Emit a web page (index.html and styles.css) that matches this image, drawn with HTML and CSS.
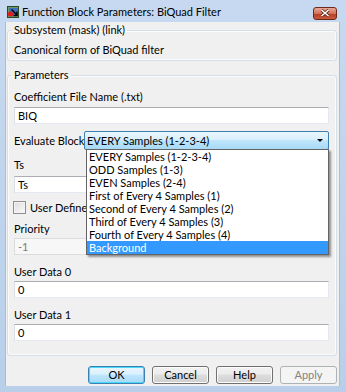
FILE: index.html
```html
<!DOCTYPE html>
<html lang="en">
<head>
    <meta charset="UTF-8">
    <title>Function Block Parameters: BiQuad Filter</title>
    <link rel="stylesheet" href="styles.css">
</head>
<body>
<div class="window">
    <div class="titlebar">
        <svg class="app-icon" width="12" height="12" viewBox="0 0 12 12">
            <rect x="0.5" y="0.5" width="11" height="11" fill="#6f9a6a" stroke="#2b4a2a"/>
            <rect x="2" y="2" width="9" height="8" fill="#3f6fc0"/>
            <circle cx="3.5" cy="8" r="2.6" fill="#e31b1b"/>
            <path d="M4.5 3.5 L10 9 M10 5.5 V9.5 H6.5" stroke="#000" stroke-width="1.4" fill="none"/>
        </svg>
        <span class="title">Function Block Parameters: BiQuad Filter</span>
        <div class="close">
            <svg width="10" height="8" viewBox="0 0 10 8">
                <path d="M1.5 1 L8.5 7 M8.5 1 L1.5 7" stroke="#5a2418" stroke-width="3"/>
                <path d="M1.5 1 L8.5 7 M8.5 1 L1.5 7" stroke="#fff" stroke-width="1.6"/>
            </svg>
        </div>
    </div>

    <div class="client">
        <fieldset class="group desc">
            <legend>Subsystem (mask) (link)</legend>
            <p>Canonical form of BiQuad filter</p>
        </fieldset>

        <fieldset class="group params">
            <legend>Parameters</legend>

            <div class="lbl first">Coefficient File Name (.txt)</div>
            <div class="edit">BIQ</div>

            <div class="select-row">
                <span class="select-lbl">Evaluate Block</span>
                <div class="select">
                    EVERY Samples (1-2-3-4)
                    <span class="arrow"></span>
                    <ul class="dropdown">
                        <li>EVERY Samples (1-2-3-4)</li>
                        <li>ODD Samples (1-3)</li>
                        <li>EVEN Samples (2-4)</li>
                        <li>First of Every 4 Samples (1)</li>
                        <li>Second of Every 4 Samples (2)</li>
                        <li>Third of Every 4 Samples (3)</li>
                        <li>Fourth of Every 4 Samples (4)</li>
                        <li class="selected">Background</li>
                    </ul>
                </div>
            </div>

            <div class="lbl">Ts</div>
            <div class="edit ts">Ts</div>

            <div class="check-row">
                <span class="checkbox"></span>
                <span class="check-lbl">User Defined Priority</span>
            </div>

            <div class="lbl">Priority</div>
            <div class="edit disabled">-1</div>

            <div class="lbl wide">User Data 0</div>
            <div class="edit">0</div>

            <div class="lbl wide">User Data 1</div>
            <div class="edit">0</div>
        </fieldset>

        <div class="buttons">
            <div class="btn default">OK</div>
            <div class="btn">Cancel</div>
            <div class="btn">Help</div>
            <div class="btn off">Apply</div>
        </div>
    </div>
</div>
</body>
</html>
```

FILE: styles.css
```css
body {
    margin: 0;
    font-family: Lato, "Liberation Sans", sans-serif;
    font-size: 11px;
    color: #000;
}
.window {
    width: 346px;
    height: 392px;
    box-sizing: border-box;
    padding: 0 6px 6px 5px;
    background: linear-gradient(#c6d9f0, #b9cfe9);
    overflow: hidden;
}
.titlebar {
    height: 22px;
    display: flex;
    align-items: center;
}
.app-icon {
    margin-left: 2px;
    margin-top: 2px;
}
.title {
    margin-left: 3px;
    margin-top: 1px;
    color: #000;
}
.close {
    margin-left: auto;
    margin-right: 3px;
    margin-top: 4px;
    width: 22px;
    height: 11px;
    border: 1px solid #6b2a1c;
    border-radius: 3px;
    background: linear-gradient(#e9a896, #d0715a 50%, #b83c22 51%, #c75a3c);
    display: flex;
    align-items: center;
    justify-content: center;
}
.client {
    height: 364px;
    box-sizing: border-box;
    background: #f0f0f0;
    border-left: 1px solid #a9bdd6;
    border-right: 1px solid #a9bdd6;
    padding: 0 2px 0 1px;
}
.group {
    margin: 0;
    border: 1px solid #d5dfe5;
    border-radius: 3px;
    box-shadow: inset 0 0 0 1px #fbfbfb;
    min-width: 0;
}
.group legend {
    padding: 0 2px;
    margin-left: -2px;
    line-height: 16px;
}
.desc {
    padding: 4px 6px 3px 6px;
}
.desc p {
    margin: 0;
    line-height: 15px;
}
.params {
    margin-top: 6px;
    padding: 0 7px 14px 6px;
}
.lbl {
    line-height: 15px;
    margin-top: 7px;
}
.lbl.first {
    margin-top: 6px;
}
.lbl.wide {
    margin-top: 9px;
}
.edit {
    height: 17px;
    box-sizing: border-box;
    margin-top: 2px;
    padding: 0 3px;
    background: #fff;
    border: 1px solid #e3e9ef;
    border-top-color: #abadb3;
    border-left-color: #dbdfe6;
    line-height: 15px;
}
.lbl.first + .edit {
    margin-top: 3px;
}
.edit.ts {
    margin-top: 4px;
}
.edit.disabled {
    background: #f7f7f7;
    color: #7a7a7a;
    border-color: #dcdcdc;
}
.select-row {
    margin-top: 7px;
    height: 19px;
    display: flex;
    align-items: center;
}
.select-lbl {
    flex: none;
    width: 70px;
    white-space: nowrap;
}
.select {
    position: relative;
    flex: 1;
    height: 19px;
    box-sizing: border-box;
    padding-left: 2px;
    border: 1px solid #3c7fb1;
    border-radius: 2px;
    background: linear-gradient(#eaf6fd, #d9f0fc 45%, #bee6fd 50%, #a7d9f5);
    line-height: 17px;
    white-space: nowrap;
}
.arrow {
    position: absolute;
    right: 5px;
    top: 7px;
    border-left: 3px solid transparent;
    border-right: 3px solid transparent;
    border-top: 3px solid #000;
}
.dropdown {
    position: absolute;
    left: 1px;
    top: 17px;
    width: 243px;
    margin: 0;
    padding: 0;
    list-style: none;
    background: #fff;
    border: 1px solid #646464;
    box-sizing: border-box;
    box-shadow: 2px 2px 2px rgba(0, 0, 0, 0.4);
    z-index: 2;
}
.dropdown li {
    height: 13px;
    line-height: 13px;
    padding-left: 2px;
}
.dropdown li.selected {
    background: #3399ff;
    color: #fff;
}
.check-row {
    margin-top: 7px;
    height: 14px;
    display: flex;
    align-items: center;
}
.checkbox {
    flex: none;
    width: 11px;
    height: 11px;
    margin-left: -1px;
    margin-right: 4px;
    border: 1px solid #8f8f8f;
    background: linear-gradient(135deg, #dcdcdc, #fbfbfb);
    box-shadow: inset 0 0 0 1px #f4f4f4;
}
/* the rest of the label sits under the open list */
.check-lbl {
    width: 57px;
    overflow: hidden;
    white-space: nowrap;
}
.buttons {
    margin-top: 10px;
    display: flex;
    justify-content: flex-end;
    gap: 7px;
}
.btn {
    width: 57px;
    height: 18px;
    box-sizing: border-box;
    border: 1px solid #707070;
    border-radius: 3px;
    background: linear-gradient(#f2f2f2, #ebebeb 45%, #dddddd 50%, #cfcfcf);
    box-shadow: inset 0 0 0 1px #fcfcfc;
    text-align: center;
    line-height: 16px;
}
.btn.default {
    border-color: #3c7fb1;
    background: linear-gradient(#eaf6fd, #d9f0fc 45%, #bee6fd 50%, #a7d9f5);
    box-shadow: inset 0 0 0 1px #48d8fb;
}
.btn.off {
    border-color: #adb2b5;
    background: #f4f4f4;
    box-shadow: none;
    color: #838383;
}
```
